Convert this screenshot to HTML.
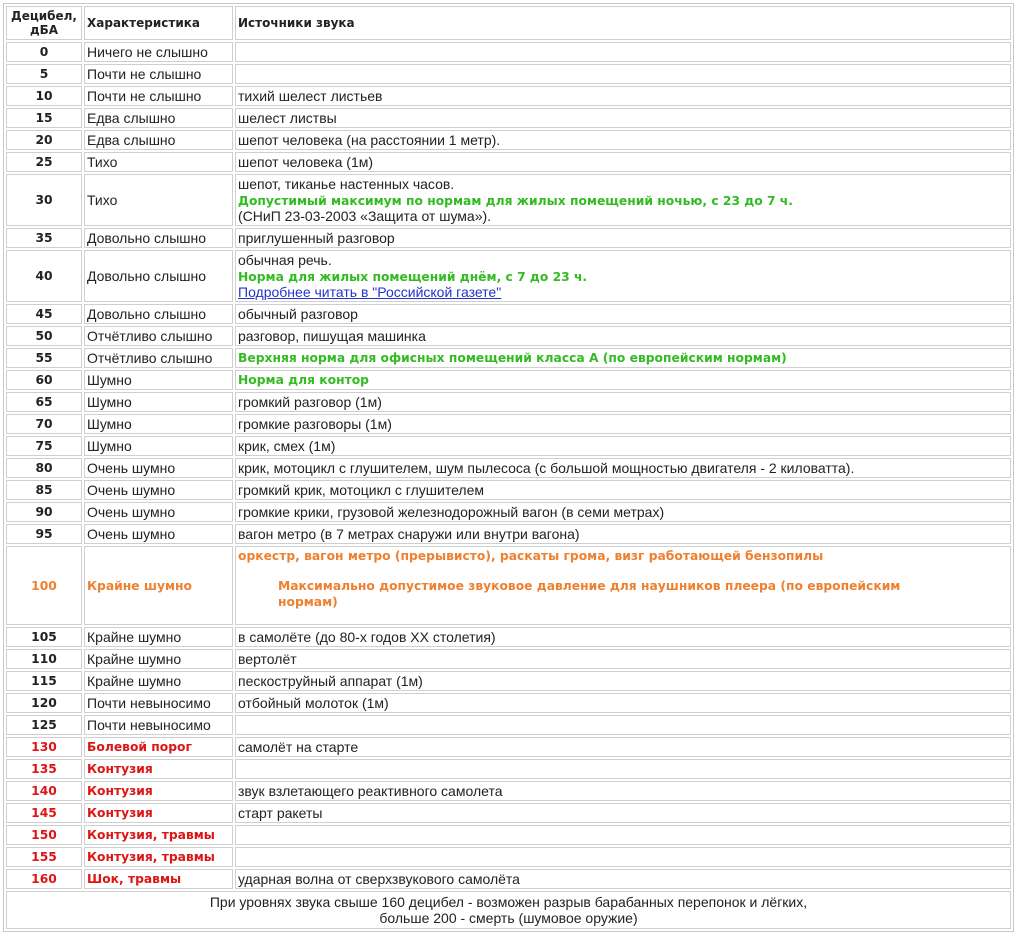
<!DOCTYPE html>
<html><head><meta charset="utf-8">
<style>
html,body{margin:0;padding:0;background:#fff;}
body{width:1016px;height:935px;overflow:hidden;}
table{position:absolute;left:3px;top:3px;width:1011px;border:1px solid #c8c8c8;border-spacing:2px;border-collapse:separate;table-layout:fixed;font-family:"Liberation Sans",Arial,sans-serif;font-size:14px;color:#222;}
td{border:1px solid #cfcfcf;padding:1px 2px;line-height:16px;vertical-align:middle;white-space:nowrap;overflow:hidden;}
td.n{text-align:center;font-family:"DejaVu Sans",Verdana,sans-serif;font-weight:bold;font-size:12.3px;}
th{border:1px solid #cfcfcf;padding:1px 2px;line-height:14px;font-family:"DejaVu Sans",Verdana,sans-serif;font-size:12px;text-align:left;height:30px;}
th.c{text-align:center;}
.b{font-family:"DejaVu Sans",Verdana,sans-serif;font-weight:bold;font-size:12.3px;}
span.b{line-height:14px;}
.g{color:#33bb22;}
.o{color:#ee8030;}
.r{color:#dd1515;}
a{color:#2233cc;text-decoration:underline;}
.ind{margin:14px 0 13px 40px;width:650px;white-space:normal;}
.f{text-align:center;white-space:normal;}
</style></head><body>
<table>
<colgroup><col style="width:76px"><col style="width:149px"><col></colgroup>
<tr><th class="c">Децибел,<br>дБА</th><th>Характеристика</th><th>Источники звука</th></tr>
<tr><td class="n">0</td><td>Ничего не слышно</td><td></td></tr>
<tr><td class="n">5</td><td>Почти не слышно</td><td></td></tr>
<tr><td class="n">10</td><td>Почти не слышно</td><td>тихий шелест листьев</td></tr>
<tr><td class="n">15</td><td>Едва слышно</td><td>шелест листвы</td></tr>
<tr><td class="n">20</td><td>Едва слышно</td><td>шепот человека (на расстоянии 1 метр).</td></tr>
<tr><td class="n">25</td><td>Тихо</td><td>шепот человека (1м)</td></tr>
<tr><td class="n">30</td><td>Тихо</td><td>шепот, тиканье настенных часов.<br><span class="b g">Допустимый максимум по нормам для жилых помещений ночью, с 23 до 7 ч.</span><br>(СНиП 23-03-2003 «Защита от шума»).</td></tr>
<tr><td class="n">35</td><td>Довольно слышно</td><td>приглушенный разговор</td></tr>
<tr><td class="n">40</td><td>Довольно слышно</td><td>обычная речь.<br><span class="b g">Норма для жилых помещений днём, с 7 до 23 ч.</span><br><a>Подробнее читать в "Российской газете"</a></td></tr>
<tr><td class="n">45</td><td>Довольно слышно</td><td>обычный разговор</td></tr>
<tr><td class="n">50</td><td>Отчётливо слышно</td><td>разговор, пишущая машинка</td></tr>
<tr><td class="n">55</td><td>Отчётливо слышно</td><td class="b g">Верхняя норма для офисных помещений класса А (по европейским нормам)</td></tr>
<tr><td class="n">60</td><td>Шумно</td><td class="b g">Норма для контор</td></tr>
<tr><td class="n">65</td><td>Шумно</td><td>громкий разговор (1м)</td></tr>
<tr><td class="n">70</td><td>Шумно</td><td>громкие разговоры (1м)</td></tr>
<tr><td class="n">75</td><td>Шумно</td><td>крик, смех (1м)</td></tr>
<tr><td class="n">80</td><td>Очень шумно</td><td>крик, мотоцикл с глушителем, шум пылесоса (с большой мощностью двигателя - 2 киловатта).</td></tr>
<tr><td class="n">85</td><td>Очень шумно</td><td>громкий крик, мотоцикл с глушителем</td></tr>
<tr><td class="n">90</td><td>Очень шумно</td><td>громкие крики, грузовой железнодорожный вагон (в семи метрах)</td></tr>
<tr><td class="n">95</td><td>Очень шумно</td><td>вагон метро (в 7 метрах снаружи или внутри вагона)</td></tr>
<tr><td class="n o">100</td><td class="b o">Крайне шумно</td><td class="b o" style="vertical-align:top">оркестр, вагон метро (прерывисто), раскаты грома, визг работающей бензопилы<div class="ind">Максимально допустимое звуковое давление для наушников плеера (по европейским нормам)</div></td></tr>
<tr><td class="n">105</td><td>Крайне шумно</td><td>в самолёте (до 80-х годов XX столетия)</td></tr>
<tr><td class="n">110</td><td>Крайне шумно</td><td>вертолёт</td></tr>
<tr><td class="n">115</td><td>Крайне шумно</td><td>пескоструйный аппарат (1м)</td></tr>
<tr><td class="n">120</td><td>Почти невыносимо</td><td>отбойный молоток (1м)</td></tr>
<tr><td class="n">125</td><td>Почти невыносимо</td><td></td></tr>
<tr><td class="n r">130</td><td class="b r">Болевой порог</td><td>самолёт на старте</td></tr>
<tr><td class="n r">135</td><td class="b r">Контузия</td><td></td></tr>
<tr><td class="n r">140</td><td class="b r">Контузия</td><td>звук взлетающего реактивного самолета</td></tr>
<tr><td class="n r">145</td><td class="b r">Контузия</td><td>старт ракеты</td></tr>
<tr><td class="n r">150</td><td class="b r">Контузия, травмы</td><td></td></tr>
<tr><td class="n r">155</td><td class="b r">Контузия, травмы</td><td></td></tr>
<tr><td class="n r">160</td><td class="b r">Шок, травмы</td><td>ударная волна от сверхзвукового самолёта</td></tr>
<tr><td colspan="3" class="f" style="padding:2px 2px 2px">При уровнях звука свыше 160 децибел - возможен разрыв барабанных перепонок и лёгких,<br>больше 200 - смерть (шумовое оружие)</td></tr>
</table>
</body></html>
